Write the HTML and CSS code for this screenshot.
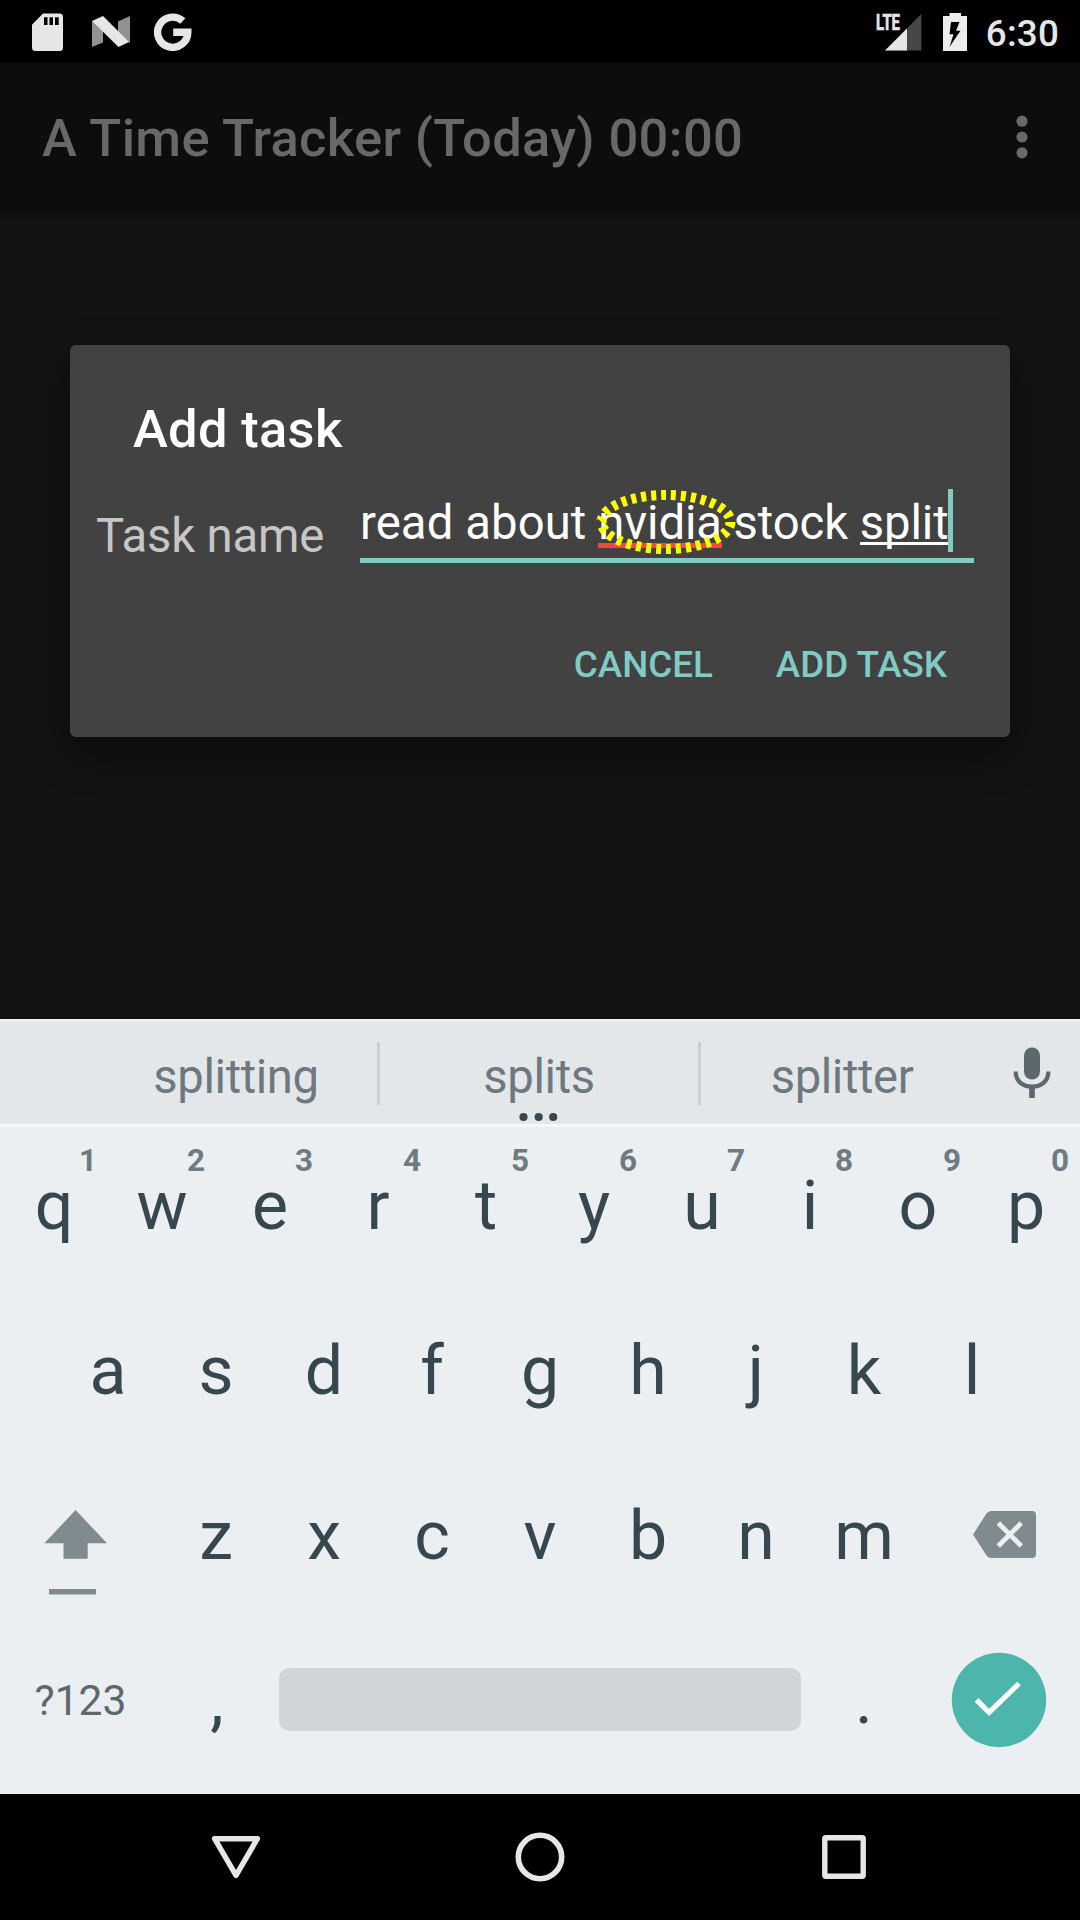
FILE: index.html
```html
<!DOCTYPE html>
<html lang="en">
<head>
<meta charset="utf-8">
<title>A Time Tracker</title>
<link rel="stylesheet" href="styles.css">
</head>
<body>
<div class="screen">
  <header class="status">
    <svg class="ic-sd" width="31" height="38" viewBox="0 0 31 38"><path fill="#e6e6e6" fill-rule="evenodd" d="M11 .5H27.500a3.500 3.500 0 0 1 3.500 3.500V34.500a3.500 3.500 0 0 1-3.500 3.500H3.500A3.500 3.500 0 0 1 0 34.500V11.800ZM12 4.300V12h3.500V4.300ZM17.500 4.300V12h3.500V4.300ZM23 4.300V12h3.700V4.300Z"/></svg>
    <svg class="ic-n" width="38" height="32" viewBox="0 0 38 32"><path fill="#929292" d="M0 5V31l11-4.500V12ZM38 0 26 5.500V18L38 27Z"/><path fill="#e6e6e6" d="M0 5 11 0 37 26 26.500 31Z"/></svg>
    <svg class="ic-g" width="38" height="38" viewBox="0 0 38 38"><path fill="none" stroke="#e6e6e6" stroke-width="7.400" d="M28.800 8A15.100 15.100 0 1 0 33.800 19.200H19.200"/></svg>
    <div class="status-right">
      <svg class="ic-signal" width="50" height="42" viewBox="-4 -4 50 42"><path fill="#474747" d="M9 37.500 45.300 1V37.500Z"/><path fill="#e6e6e6" d="M9 37.500 31 15.500V37.500Z"/><text class="lte" x="0" y="17" textLength="24" lengthAdjust="spacingAndGlyphs">LTE</text></svg>
      <svg class="ic-bat" width="24" height="38" viewBox="0 0 24 38"><path fill="#ececec" d="M0 3H6.500V0H18V3H24V38H0Z"/><path fill="#000" d="M8 9H16.500L13 17.800H17.500L6.500 34 10.500 21.200H6.500Z"/></svg>
      <span class="clock">6:30</span>
    </div>
  </header>

  <div class="appbar">
    <h1 class="app-title">A Time Tracker (Today) 00:00</h1>
    <svg class="overflow" width="12" height="44" viewBox="0 0 12 44"><g fill="#686868"><circle cx="6" cy="6.200" r="5.600"/><circle cx="6" cy="22" r="5.600"/><circle cx="6" cy="37.800" r="5.600"/></g></svg>
  </div>

  <main class="content">
    <section class="dialog">
      <h2 class="dialog-title">Add task</h2>
      <div class="field">
        <label class="label">Task name</label>
        <div class="input">
          <span><span class="lead">read about </span><span class="misspelt">nvidia<svg class="ring" width="142" height="68" viewBox="0 0 142 68"><ellipse cx="71" cy="34" rx="64.500" ry="27" fill="none" stroke="#ff0" stroke-width="10" stroke-dasharray="5 5" pathLength="300"/></svg></span> stock <span class="composing">split<i class="caret"></i></span></span>
        </div>
      </div>
      <div class="actions"><span>CANCEL</span><span>ADD TASK</span></div>
    </section>
  </main>

  <section class="keyboard">
    <div class="suggestions">
      <span class="word">splitting</span>
      <span class="word middle">splits<svg class="more" width="40" height="10" viewBox="0 0 40 10"><g fill="#37474f"><circle cx="4.500" cy="5" r="4.100"/><circle cx="19.700" cy="5" r="4.100"/><circle cx="34.200" cy="5" r="4.100"/></g></svg></span>
      <span class="word">splitter</span>
      <svg class="mic" width="38" height="52" viewBox="0 0 38 52"><rect x="11" y="0.500" width="16" height="32" rx="8" fill="#5b686e"/><path fill="none" stroke="#5b686e" stroke-width="4.200" d="M2.600 24.500C2.600 34 9.500 39.700 19 39.700S35.400 34 35.400 24.500"/><path fill="#5b686e" d="M16.200 39H21.800V51H16.200Z"/></svg>
    </div>
    <div class="keys">
      <div class="row ten"><span>q<b>1</b></span><span>w<b>2</b></span><span>e<b>3</b></span><span>r<b>4</b></span><span>t<b>5</b></span><span>y<b>6</b></span><span>u<b>7</b></span><span>i<b>8</b></span><span>o<b>9</b></span><span>p<b>0</b></span></div>
      <div class="row nine"><span>a</span><span>s</span><span>d</span><span>f</span><span>g</span><span>h</span><span>j</span><span>k</span><span>l</span></div>
      <div class="row seven">
        <svg width="162" height="165" viewBox="0 0 162 165"><path fill="#808b8f" d="M75.600 57 107 90.300H87.700V105.800H63.500V90.300H44.300ZM49 136H96V141.500H49Z"/></svg>
        <span>z</span><span>x</span><span>c</span><span>v</span><span>b</span><span>n</span><span>m</span>
        <svg width="162" height="165" viewBox="0 0 162 165"><path fill="#808b8f" d="M55 81.500 68.500 60.500Q70.500 58 73 58H114a4 4 0 0 1 4 4V101a4 4 0 0 1-4 4H73Q70.500 105 68.500 102.500Z"/><path stroke="#ebeff1" stroke-width="4.800" d="M80.300 70 103.300 93M103.300 70 80.300 93"/></svg>
      </div>
      <div class="row bottom">
        <span class="symbols">?123</span><span class="comma">,</span><span class="space"></span><span>.</span>
        <svg width="162" height="165" viewBox="0 0 162 165"><circle cx="81" cy="82" r="47.200" fill="#4db6ac"/><path fill="none" stroke="#fff" stroke-width="5.200" d="M58.500 81.800 71.100 94.400 101 65.500"/></svg>
      </div>
    </div>
  </section>

  <nav class="nav">
    <svg width="50" height="50" viewBox="0 0 50 50"><path fill="none" stroke="#e6e6e6" stroke-width="5.400" stroke-linejoin="round" d="M3.600 6.700H46.400L25 43.300Z"/></svg>
    <svg width="50" height="50" viewBox="0 0 50 50"><circle cx="25" cy="25" r="21.700" fill="none" stroke="#e6e6e6" stroke-width="5.600"/></svg>
    <svg width="50" height="50" viewBox="0 0 50 50"><rect x="5.800" y="5.800" width="38.400" height="38.400" rx="1" fill="none" stroke="#e6e6e6" stroke-width="5.400"/></svg>
  </nav>
</div>
</body>
</html>
```
FILE: styles.css
```css
* { box-sizing: border-box; }
body { margin: 0; background: #000; font-family: Roboto, "Noto Sans", sans-serif; }
svg { display: block; flex: none; }
h1, h2 { margin: 0; font-weight: 500; }
.screen { width: 1080px; height: 1920px; display: flex; flex-direction: column; overflow: hidden; }

.status { height: 63px; padding: 0 21px 0 32px; display: flex; align-items: center; background: #000; }
.ic-n { margin-left: 29px; }
.ic-g { margin-left: 24px; }
.status-right { margin-left: auto; display: flex; align-items: center; }
.ic-signal { margin-top: -4px; }
.lte { font-size: 22.5px; font-weight: 700; fill: #e6e6e6; stroke: #e6e6e6; stroke-width: .7px; }
.ic-bat { margin-left: 21px; }
.clock { margin-left: 19px; padding-top: 3px; font-size: 36.75px; font-weight: 500; line-height: 43px; letter-spacing: .2px; color: #e6e6e6; }

.appbar { height: 147px; padding: 0 52px 0 42px; display: flex; align-items: center; justify-content: space-between; background: #0d0d0d; box-shadow: 0 2px 5px #0d0d0d; z-index: 1; }
.app-title { padding-top: 3px; font-size: 52.5px; line-height: 62px; letter-spacing: .33px; color: #686868; white-space: nowrap; }

.content { height: 809px; padding: 135px 70px 0; background: #131313; }
.dialog { height: 392px; padding: 52px 0 0; border-radius: 6px; background: #424242; box-shadow: 0 16px 40px rgba(0, 0, 0, .4); color: #fff; display: flex; flex-direction: column; }
.dialog-title { padding: 1px 0 1px 63px; font-size: 52.5px; line-height: 62px; letter-spacing: .3px; }
.field { display: flex; align-items: flex-start; padding: 0 36px 0 26px; height: 120px; }
.label { width: 264px; padding-top: 47px; font-size: 47.25px; line-height: 56px; letter-spacing: -.15px; color: #c6c6c6; }
.input { width: 614px; height: 102px; padding-top: 34px; border-bottom: 5px solid #80cbc4; font-size: 47.25px; line-height: 56px; letter-spacing: -.1px; white-space: nowrap; }
.lead { letter-spacing: .1px; }
.misspelt, .composing { position: relative; }
.misspelt::before { content: ""; position: absolute; left: 0; right: 0; bottom: 3px; height: 5px; background: #ff4343; }
.composing::before { content: ""; position: absolute; left: 0; right: 0; bottom: 6px; height: 3px; background: #fff; }
.ring { position: absolute; left: -3px; top: -7px; }
.caret { position: absolute; right: -4px; top: -6px; width: 5px; height: 63px; background: #80cbc4; }
.actions { display: flex; justify-content: flex-end; gap: 63px; padding: 62px 63px 0 0; font-size: 36.75px; font-weight: 500; line-height: 44px; color: #80cbc4; }

.keyboard { height: 775px; background: #ebeff1; }
.suggestions { height: 108px; border-top: 3px solid #eef0f1; border-bottom: 3px solid #f5f7f8; padding-left: 95px; display: flex; align-items: center; background: #e3e7e9; }
.word { position: relative; width: 282px; text-align: center; font-size: 47.25px; line-height: 63px; letter-spacing: -.4px; padding-top: 4px; height: 63px; color: #6d797f; }
.middle { width: 324px; border-left: 3px solid #cacfd1; border-right: 3px solid #cacfd1; }
.more { position: absolute; left: 139px; top: 70px; }
.mic { margin-left: 30px; }
.keys { font-size: 68px; color: #37474f; }
.row { display: grid; height: 165px; line-height: 167px; text-align: center; }
.ten { grid-template-columns: repeat(10, 108px); margin-top: -4px; position: relative; }
.ten span { position: relative; }
.ten b { position: absolute; left: 68px; top: 19px; width: 40px; font-size: 31.5px; line-height: 38px; color: #6f7b81; }
.nine { grid-template-columns: repeat(9, 108px); padding-left: 54px; }
.seven { grid-template-columns: 162px repeat(7, 108px) 162px; }
.bottom { grid-template-columns: 162px 108px 540px 108px 162px; line-height: 165px; }
.symbols { font-size: 42.6px; padding-right: 1px; color: #5b686e; }
.comma { padding-left: 2px; }
.space { margin: 50px 9px; height: 63px; border-radius: 10px; background: #d1d5d8; }
.nav { height: 126px; padding: 0 211px; display: flex; justify-content: space-between; align-items: center; background: #000; }
```
